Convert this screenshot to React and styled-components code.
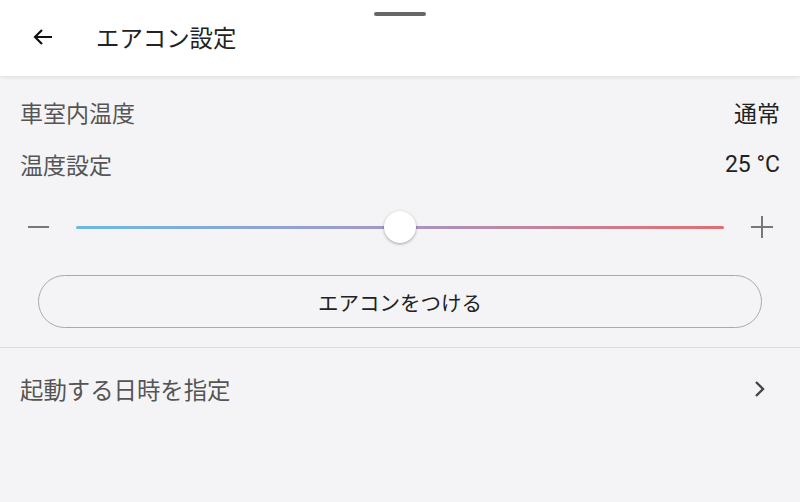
import React from "react";
import styled, { createGlobalStyle } from "styled-components";

const GlobalStyle = createGlobalStyle`
  html, body {
    margin: 0;
    padding: 0;
    background: #f4f4f6;
  }
  body {
    font-family: Roboto, "Noto Sans CJK JP", "Noto Sans", sans-serif;
  }
`;

const Page = styled.div`
  width: 800px;
  height: 502px;
  background: #f4f4f6;
  overflow: hidden;
`;

const Header = styled.header`
  position: relative;
  height: 76px;
  background: #ffffff;
  box-shadow: 0 1px 4px rgba(0, 0, 0, 0.1);
  display: flex;
  align-items: center;
  padding: 0 0 2px 30px;
  box-sizing: border-box;
  gap: 40px;
`;

const Handle = styled.div`
  position: absolute;
  top: 12px;
  left: 374px;
  width: 52px;
  height: 4px;
  border-radius: 2px;
  background: #666;
`;

const BackButton = styled.div`
  width: 26px;
  height: 26px;
  display: flex;
  align-items: center;
  justify-content: center;
`;

const Title = styled.h1`
  margin: 0;
  font-size: 23.4px;
  font-weight: 400;
  color: #222;
`;

const Body = styled.main`
  padding: 0 20px;
`;

const InfoRow = styled.div`
  display: flex;
  justify-content: space-between;
  align-items: center;
  height: 52px;
  font-size: 23px;
  &:first-child {
    margin-top: 10px;
  }
`;

const Label = styled.span`
  color: #555;
`;

const Value = styled.span`
  color: #222;
`;

const SliderRow = styled.div`
  display: flex;
  align-items: center;
  height: 60px;
  margin-top: 7px;
`;

const StepIcon = styled.div`
  width: 36px;
  height: 36px;
  display: flex;
  align-items: center;
  justify-content: center;
  flex-shrink: 0;
`;

const Track = styled.div`
  position: relative;
  flex: 1;
  height: 3px;
  margin: 0 20px;
  border-radius: 2px;
  background: linear-gradient(to right, #6bb9e2, #a597c2 50%, #e36d6f);
`;

const Thumb = styled.div`
  position: absolute;
  top: 50%;
  left: ${(p) => p.$pos}%;
  width: 32px;
  height: 32px;
  border-radius: 50%;
  background: #fff;
  transform: translate(-50%, -50%);
  box-shadow: 0 1px 3px rgba(0, 0, 0, 0.35);
`;

const ActionButton = styled.button`
  display: block;
  width: 724px;
  height: 53px;
  margin: 18px 0 0 18px;
  border: 1px solid #aaa;
  border-radius: 27px;
  background: transparent;
  font-family: inherit;
  font-size: 20.5px;
  color: #222;
`;

const Divider = styled.hr`
  margin: 19px 0 0;
  border: 0;
  border-top: 1px solid #dcdcdf;
`;

const LinkRow = styled.div`
  display: flex;
  justify-content: space-between;
  align-items: center;
  height: 82px;
  padding: 0 33px 2px 20px;
  font-size: 23.4px;
  color: #555;
`;

export default function App() {
  return (
    <Page>
      <GlobalStyle />
      <Header>
        <Handle />
        <BackButton>
          <svg width="24" height="24" viewBox="0 0 24 24">
            <path d="M21 12H4M11 5l-7 7 7 7" fill="none" stroke="#111" strokeWidth="2.2" />
          </svg>
        </BackButton>
        <Title>エアコン設定</Title>
      </Header>
      <Body>
        <InfoRow>
          <Label>車室内温度</Label>
          <Value>通常</Value>
        </InfoRow>
        <InfoRow>
          <Label>温度設定</Label>
          <Value>25 °C</Value>
        </InfoRow>
        <SliderRow>
          <StepIcon>
            <svg width="24" height="24" viewBox="0 0 24 24">
              <path d="M2 12h21" stroke="#777" strokeWidth="2" />
            </svg>
          </StepIcon>
          <Track>
            <Thumb $pos={50} />
          </Track>
          <StepIcon>
            <svg width="24" height="24" viewBox="0 0 24 24">
              <path d="M1 12h22M12 1v22" stroke="#777" strokeWidth="2" />
            </svg>
          </StepIcon>
        </SliderRow>
        <ActionButton>エアコンをつける</ActionButton>
      </Body>
      <Divider />
      <LinkRow>
        <span>起動する日時を指定</span>
        <svg width="14" height="18" viewBox="0 0 14 18">
          <path d="M3 2l7 7-7 7" fill="none" stroke="#444" strokeWidth="2.4" />
        </svg>
      </LinkRow>
    </Page>
  );
}
